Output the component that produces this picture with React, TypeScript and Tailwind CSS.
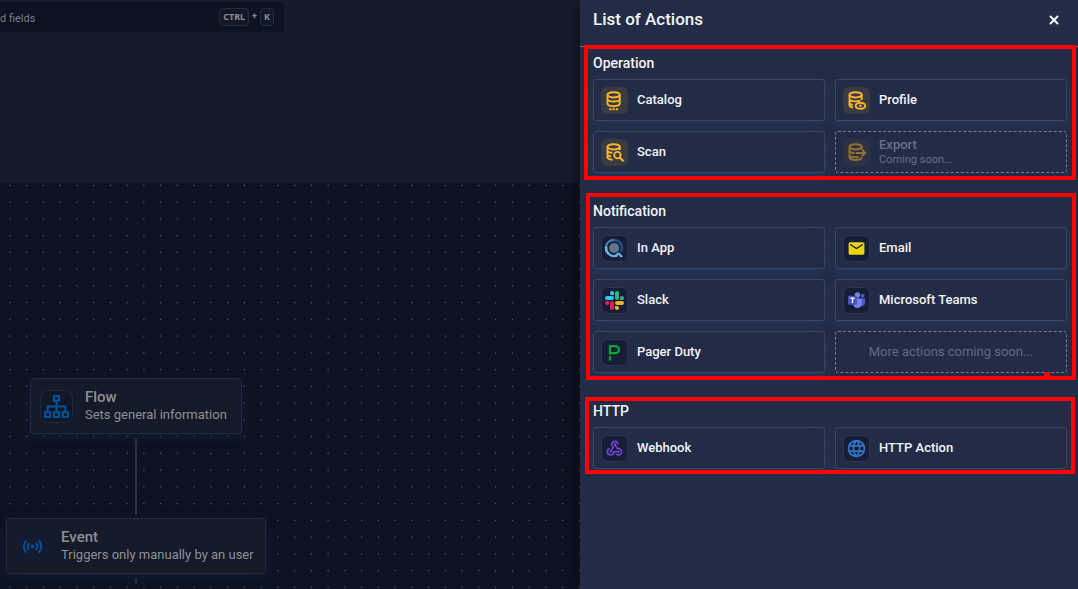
import type { ReactNode } from "react";
import { X } from "lucide-react";
import { MdEmail, MdLanguage, MdSensors, MdWebhook } from "react-icons/md";

function DatabaseIcon({ kind }: { kind: "catalog" | "profile" | "scan" | "export" }) {
  return (
    <svg viewBox="0 0 24 24" className="size-[21px]" fill="none" stroke="currentColor" strokeWidth="2.2">
      <ellipse cx="11" cy="5.5" rx="7" ry="3" />
      {kind === "catalog" && (
        <>
          <path d="M4 5.5v10c0 1.7 3.1 3 7 3s7-1.3 7-3v-10M4 10.200c0 1.700 3.100 3 7 3s7-1.300 7-3" />
          <path d="M6 22h2.500M9.800 22h2.500M13.600 22h2.500" strokeWidth="2.400" />
        </>
      )}
      {kind === "profile" && (
        <>
          <path d="M4 5.500v12c0 1.200 1.600 2.200 4 2.700M18 5.500v6M4 10c0 1.700 3.100 3 7 3 2.200 0 4-.4 5.400-1.100M4 14.500c0 1.200 1.500 2.200 3.800 2.700" />
          <ellipse cx="16.500" cy="18" rx="5.500" ry="3.500" />
          <circle cx="16.500" cy="18" r="1.400" fill="currentColor" stroke="none" />
        </>
      )}
      {kind === "scan" && (
        <>
          <path d="M4 5.500v12c0 1.500 2.500 2.600 6 2.900M18 5.500v4M4 9.700c0 1.500 2.300 2.400 5.600 2.600M4 14c0 1.300 1.700 2.200 4.300 2.700" />
          <circle cx="15.300" cy="15" r="3.700" />
          <path d="m18 17.700 4.300 4.300" strokeWidth="2.600" />
        </>
      )}
      {kind === "export" && (
        <>
          <path d="M4 5.500v12c0 1.700 3.100 3 7 3s7-1.300 7-3M18 5.500v2.500M4 10c0 1.500 2.300 2.500 5.600 2.800M4 14.500c0 1.700 3.100 3 7 3 1.300 0 2.500-.1 3.500-.4" />
          <path d="M11 12.500h11M18 8.500l4 4-4 4" />
        </>
      )}
    </svg>
  );
}

function InAppIcon() {
  return (
    <svg viewBox="0 0 20 20" className="size-[21px]" fill="none" strokeWidth="2.200">
      <path d="M9.500 2A7.500 7.500 0 0 1 16.200 13" stroke="#1b5688" />
      <path d="M9.500 2A7.500 7.500 0 0 0 4.200 15" stroke="#3c7fb8" />
      <path d="M2.300 8A7.500 7.500 0 0 0 13 16.300M12 15.200h2.500l2.500 3" stroke="#6fb0e6" />
      <circle cx="9.700" cy="9.500" r="4.800" fill="#64748b" />
    </svg>
  );
}

function SlackIcon() {
  return (
    <svg viewBox="0 0 122.8 122.8" className="size-[19px]">
      <path fill="#e01e5a" d="M25.800 77.600a12.900 12.900 0 1 1-12.900-12.900h12.900zM32.300 77.600a12.900 12.900 0 0 1 25.800 0v32.300a12.900 12.900 0 0 1-25.800 0z" />
      <path fill="#36c5f0" d="M45.200 25.800a12.900 12.900 0 1 1 12.900-12.900v12.900zM45.200 32.300a12.900 12.900 0 0 1 0 25.800H12.900a12.900 12.900 0 0 1 0-25.800z" />
      <path fill="#2eb67d" d="M97 45.200a12.900 12.900 0 1 1 12.900 12.900H97zM90.500 45.200a12.900 12.900 0 0 1-25.800 0V12.900a12.900 12.900 0 0 1 25.800 0z" />
      <path fill="#ecb22e" d="M77.600 97a12.900 12.900 0 1 1-12.900 12.900V97zM77.600 90.500a12.900 12.900 0 0 1 0-25.800h32.300a12.900 12.900 0 0 1 0 25.800z" />
    </svg>
  );
}

function TeamsIcon() {
  return (
    <svg viewBox="0 0 20 20" className="size-[19px]">
      <circle cx="16.500" cy="5" r="2" fill="#5059c9" />
      <path d="M13 8h6v5a3 3 0 0 1-5 2z" fill="#5059c9" />
      <circle cx="11" cy="4.200" r="2.800" fill="#7b83eb" />
      <path d="M6.500 8h9v5.500a4.500 4.500 0 0 1-9 0z" fill="#7b83eb" />
      <rect x="1" y="5" width="9.500" height="9.500" rx="1" fill="#4b53bc" />
      <path d="M3.500 7.500h4.600M5.800 7.500v5" stroke="#fff" strokeWidth="1.400" />
    </svg>
  );
}

function PagerDutyIcon() {
  return (
    <svg viewBox="0 0 16 18" className="h-[17px] w-[15px]" fill="none" stroke="#06a537" strokeWidth="2.400">
      <path d="M3.200 11V2.200H9a3.700 3.700 0 0 1 0 7.500H3.200" />
      <path d="M3.200 13v4.500" />
    </svg>
  );
}

function SitemapIcon() {
  return (
    <svg viewBox="0 0 24 24" className="size-[25px]" fill="none" stroke="currentColor" strokeWidth="2">
      <rect x="9.500" y="2" width="5" height="4.500" />
      <rect x="1" y="17.500" width="5" height="4.500" />
      <rect x="9.500" y="17.500" width="5" height="4.500" />
      <rect x="18" y="17.500" width="5" height="4.500" />
      <path d="M12 6.500v11M3.500 17.500V12h17v5.500" />
    </svg>
  );
}

type TileTone = "amber" | "dark";

function ActionCard({ icon, label, tone = "dark" }: { icon: ReactNode; label: string; tone?: TileTone }) {
  return (
    <button
      type="button"
      className="flex h-[42px] items-center gap-[9px] rounded-[3px] border border-[#3b455e] bg-[#232c46] px-[7px] text-left text-[13px] font-medium text-[#f1f3f6] shadow-[0_4px_12px_rgba(42,72,125,0.4)]"
    >
      <span
        className={
          tone === "amber"
            ? "flex size-[27px] items-center justify-center rounded-md bg-[#3a3a42] text-[#f9b52e]"
            : "flex size-[27px] items-center justify-center rounded-md border border-[#2c364b] bg-[#151e36]"
        }
      >
        {icon}
      </span>
      {label}
    </button>
  );
}

function Section({ title, frame, children }: { title: string; frame: string; children: ReactNode }) {
  return (
    <section className="relative">
      <h2 className="flex h-8 items-center text-sm font-medium">{title}</h2>
      <div className="grid grid-cols-2 gap-2.5">{children}</div>
      <div className={`pointer-events-none absolute border-4 border-[#fe0000] ${frame}`} />
    </section>
  );
}

function Canvas() {
  return (
    <div className="relative flex-1 overflow-hidden border-t border-[#111726] bg-[#0d1221]">
      <svg className="absolute inset-0 size-full">
        <defs>
          <pattern id="dots" x="1.5" y="-6" width="16.75" height="16.75" patternUnits="userSpaceOnUse">
            <circle cx="8.400" cy="8.400" r="0.650" fill="#606570" />
          </pattern>
        </defs>
        <rect width="100%" height="100%" fill="url(#dots)" />
        <path d="M136 255v77M136 395v6M136 406v20" stroke="#3a3e48" strokeWidth="1.500" />
      </svg>
      <div className="absolute left-[30px] top-[195px] flex h-14 w-[212px] items-center gap-3 rounded border border-[#242a38] bg-[#151a29] px-[9px] shadow-[0_4px_12px_rgba(15,35,70,0.6)]">
        <span className="flex size-[33px] shrink-0 items-center justify-center rounded-lg border border-[#20293a] bg-[#111727] text-[#07509a]">
          <SitemapIcon />
        </span>
        <div className="whitespace-nowrap text-[#8d8f94]">
          <h3 className="text-[15px] font-medium leading-[18px]">Flow</h3>
          <p className="text-[13px] leading-[18px]">Sets general information</p>
        </div>
      </div>
      <div className="absolute left-[6px] top-[335px] flex h-14 w-[260px] items-center gap-3 rounded border border-[#242a38] bg-[#151a29] px-[9px] shadow-[0_4px_12px_rgba(15,35,70,0.6)]">
        <span className="flex size-[33px] shrink-0 items-center justify-center rounded-lg bg-[#121b30] text-[#07509a]">
          <MdSensors className="size-[23px]" />
        </span>
        <div className="whitespace-nowrap text-[#8d8f94]">
          <h3 className="text-[15px] font-medium leading-[18px]">Event</h3>
          <p className="text-[13px] leading-[18px]">Triggers only manually by an user</p>
        </div>
      </div>
    </div>
  );
}

export default function App() {
  return (
    <div className="flex min-h-screen bg-[#151b2a] font-['Roboto',sans-serif]">
      <main className="flex min-w-0 flex-1 flex-col">
        <header className="flex h-[42px] border-b border-[#131827] pt-0.5">
          <label className="flex h-[30px] w-[284px] items-center rounded-r bg-[#0d1221] pr-2.5 text-[#888b91]">
            <input
              type="search"
              aria-label="Search"
              placeholder="d fields"
              className="h-full min-w-0 flex-1 bg-transparent pt-0.5 text-[11px] outline-none placeholder:text-[#797c83]"
            />
            <span className="flex items-center gap-[3px] text-[9px] font-bold">
              <kbd className="rounded border border-[#252b39] bg-[#121827] px-[3px] py-px font-['Noto_Sans',sans-serif]">CTRL</kbd>
              <span>+</span>
              <kbd className="rounded border border-[#252b39] bg-[#121827] px-[3px] py-px font-['Noto_Sans',sans-serif]">K</kbd>
            </span>
          </label>
        </header>
        <div className="h-[140px]" />
        <Canvas />
      </main>
      <aside className="relative w-[498px] shrink-0 bg-[#232c46] text-[#f1f3f6] shadow-[0_0_16px_rgba(0,0,0,0.45)]">
        <header className="flex h-[47px] items-center justify-between border-b border-[#697184] pb-1.5 pl-[13px] pr-[17px]">
          <h1 className="text-[17px] font-medium">List of Actions</h1>
          <button type="button" aria-label="Close">
            <X className="size-[14px]" strokeWidth={3.5} />
          </button>
        </header>
        <div className="flex flex-col gap-[22px] pl-[13px] pr-[11px]">
          <Section title="Operation" frame="-top-0.5 -bottom-[7px] -left-[9px] -right-[9px]">
            <ActionCard tone="amber" icon={<DatabaseIcon kind="catalog" />} label="Catalog" />
            <ActionCard tone="amber" icon={<DatabaseIcon kind="profile" />} label="Profile" />
            <ActionCard tone="amber" icon={<DatabaseIcon kind="scan" />} label="Scan" />
            <button
              type="button"
              disabled
              className="flex h-[42px] items-center gap-[9px] rounded-[3px] border border-dashed border-[#747b8a] px-[7px] text-left text-[#667084]"
            >
              <span className="flex size-[27px] items-center justify-center rounded-md bg-[#2d3242] text-[#956f32]">
                <DatabaseIcon kind="export" />
              </span>
              <span className="flex flex-col">
                <span className="text-[13px] font-medium leading-4">Export</span>
                <span className="text-[11px] leading-[14px]">Coming soon...</span>
              </span>
            </button>
          </Section>
          <Section title="Notification" frame="-top-0.5 -bottom-[7px] -left-[7px] -right-[9px]">
            <ActionCard icon={<InAppIcon />} label="In App" />
            <ActionCard icon={<MdEmail className="size-[19px] text-[#ead50a]" />} label="Email" />
            <ActionCard icon={<SlackIcon />} label="Slack" />
            <ActionCard icon={<TeamsIcon />} label="Microsoft Teams" />
            <ActionCard icon={<PagerDutyIcon />} label="Pager Duty" />
            <div className="relative flex h-[42px] items-center justify-center rounded-[3px] border border-dashed border-[#747b8a] text-[13px] text-[#606a7f]">
              More actions coming soon...
              <span className="absolute -bottom-1 right-4 h-1 w-1.5 bg-[#fe0000]" />
            </div>
          </Section>
          <Section title="HTTP" frame="top-0.5 -bottom-[5px] -left-2 -right-2">
            <ActionCard icon={<MdWebhook className="size-[19px] text-[#7743d6]" />} label="Webhook" />
            <ActionCard icon={<MdLanguage className="size-[21px] text-[#3275c8]" />} label="HTTP Action" />
          </Section>
        </div>
      </aside>
    </div>
  );
}
